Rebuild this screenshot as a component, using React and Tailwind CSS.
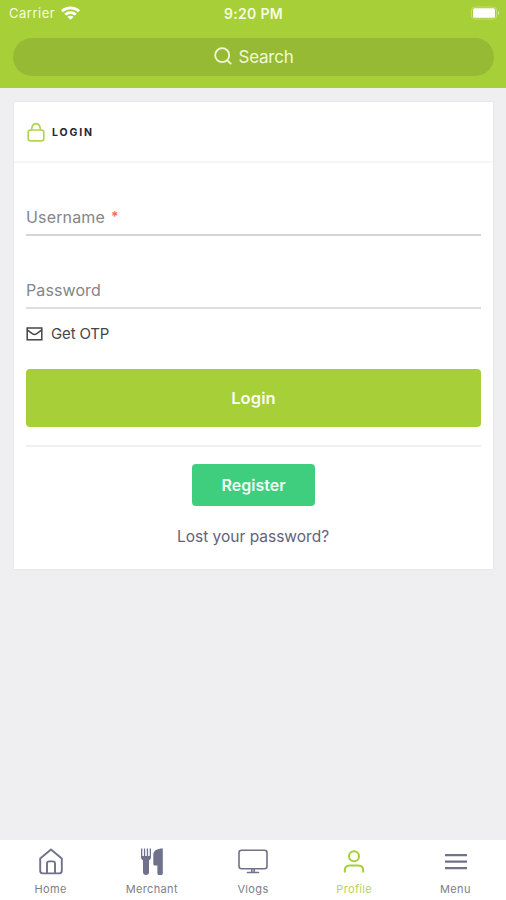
import React from "react";

const stroke = { fill: "none", stroke: "currentColor", strokeLinecap: "round", strokeLinejoin: "round" };

function StatusBar() {
  return (
    <div className="grid h-[26px] grid-cols-3 items-center pt-px pl-[9px] pr-[6px] text-[13px] text-[#f6fce0]">
      <div className="flex items-center gap-[6px]">
        <span className="tracking-[0.5px]">Carrier</span>
        <svg className="-mt-px" width="19" height="14" viewBox="0 0 18 14" fill="none" stroke="#fff" strokeWidth="2.7" preserveAspectRatio="none">
          <path d="M.9 5.2a11.5 11.5 0 0 1 16.2 0" />
          <path d="M4 8.6a7.1 7.1 0 0 1 10 0" />
          <path d="M9 13.7 6.2 10.9a3.9 3.9 0 0 1 5.6 0Z" fill="#fff" stroke="none" />
        </svg>
      </div>
      <span className="-ml-[2px] text-center text-[14px] font-semibold tracking-[0.3px] whitespace-nowrap">9:20 PM</span>
      <svg className="-mt-px justify-self-end" width="30" height="14" viewBox="0 0 30 14">
        <rect x="1.5" y="1" width="25" height="12" rx="3" fill="none" stroke="#c1dd75" />
        <rect x="3" y="2.3" width="22" height="9.4" rx="1.5" fill="#fff" />
        <path d="M28 4.8c1.6.6 1.6 3.8 0 4.4Z" fill="#d3e89a" />
      </svg>
    </div>
  );
}

function Header() {
  return (
    <header className="h-[88px] shrink-0 bg-[#a6cf38]">
      <StatusBar />
      <div className="mr-3 ml-[13px] mt-3 flex h-[38px] items-center justify-center gap-[7px] rounded-full bg-[#96ba34] text-[#f1f9d6]">
        <svg className="-mt-[2px]" width="18" height="18" viewBox="0 0 18 18" {...stroke} strokeWidth="1.8">
          <circle cx="8.2" cy="8.2" r="7" />
          <path d="m13.3 13.3 3.4 3.4" />
        </svg>
        <span className="pt-[2px] text-[17px] tracking-[-0.25px]">Search</span>
      </div>
    </header>
  );
}

function LoginCard() {
  return (
    <main className="mx-[14px] mt-[14px] h-[467px] w-[479px] bg-white px-3 shadow-[0_0_2px_rgba(0,0,0,0.1)]">
      <div className="-mx-3 flex h-[61px] items-center gap-2 border-b-2 border-[#f6f6f9] px-[13px]">
        <svg className="text-[#b2d44f]" width="18" height="20" viewBox="0 0 18 20" {...stroke} strokeWidth="1.7">
          <rect x="1.2" y="8" width="15.6" height="10.8" rx="2.4" />
          <path d="M4.4 7.8 5.2 4.6a3.9 3.9 0 0 1 7.6 0l.8 3.2" />
        </svg>
        <h1 className="-ml-px mt-[2px] text-[10.5px] font-bold tracking-[1.85px] text-[#25253a]">LOGIN</h1>
      </div>
      <div className="flex h-[73px] items-end border-b-2 border-[#d5d5d7] pb-[5px] text-[16px] leading-6 text-[#85858a]">
        <span className="tracking-[0.15px]">Username</span>
        <span className="ml-[6px] text-[14px] font-semibold text-[#f26666]">*</span>
      </div>
      <div className="flex h-[73px] items-end border-b-2 border-[#dddde0] pb-[5px] text-[16px] leading-6 tracking-[0.1px] text-[#85858a]">
        Password
      </div>
      <div className="mt-[14px] flex h-[22px] items-center gap-2 text-[15px] tracking-[-0.15px] text-[#46464a]">
        <svg width="17" height="14" viewBox="0 0 17 14" fill="none" stroke="currentColor" strokeWidth="1.5">
          <rect x="1.2" y="1" width="14.6" height="11.8" />
          <path d="M1.5 3.2 6.6 6.8q1.9 1.2 3.8 0l5.1-3.6" strokeLinecap="round" />
        </svg>
        <span>Get OTP</span>
      </div>
      <button className="mt-[24px] h-[58px] w-full rounded-[4px] bg-[#a6cf38] text-[16.5px] font-semibold tracking-[0.1px] text-[#fbfef0]">Login</button>
      <div className="mt-[18px] h-0.5 bg-[#f0f0f2]" />
      <div className="mt-[17px] flex flex-col items-center">
        <button className="h-[42px] w-[123px] rounded-[4px] bg-[#3fce7e] text-[16px] font-semibold text-[#f0fdf5]">Register</button>
        <a className="mt-[19px] mr-px text-[15.5px] leading-6 whitespace-nowrap text-[#62627a]">Lost your password?</a>
      </div>
    </main>
  );
}

const tabs = [
  {
    label: "Home",
    icon: (
      <svg width="26" height="28" viewBox="0 0 26 28" {...stroke} strokeWidth="1.9">
        <path d="M2.2 10.4 13 1.6l10.8 8.8v12.4a2.6 2.6 0 0 1-2.6 2.6H4.8a2.6 2.6 0 0 1-2.6-2.6Z" />
        <path d="M9 25v-9.4c0-1.4.8-2.2 2.2-2.2h3.6c1.4 0 2.2.8 2.2 2.2V25" />
      </svg>
    ),
  },
  {
    label: "Merchant",
    icon: (
      <svg width="24" height="28" viewBox="0 0 24 28" fill="currentColor">
        <path d="M1 .5h1.3V8h1.6V.5h1.3V8h1.6V.5h1.3V8h1.6V.5H11V9c0 1.8-.8 2.8-2 3.3V24a3 3 0 0 1-6 0V12.3C1.8 11.8 1 10.8 1 9Z" />
        <path d="M22.8.4v25.2c0 .9-.6 1.5-1.5 1.5h-2.4c-.9 0-1.5-.6-1.5-1.5V17.5h-2.6c-.9 0-1.5-.6-1.5-1.5V6.5C13.3 2.5 17 .4 22.8.4Z" />
      </svg>
    ),
  },
  {
    label: "Vlogs",
    icon: (
      <svg width="30" height="28" viewBox="0 0 30 28" {...stroke} strokeWidth="1.6">
        <rect x="1" y="2.2" width="28" height="18.5" rx="2.5" />
        <path d="M13.8 21v3M16.2 21v3M9.5 24.5h11" />
      </svg>
    ),
  },
  {
    label: "Profile",
    icon: (
      <svg width="24" height="28" viewBox="0 0 24 28" {...stroke} strokeLinecap="butt" strokeWidth="2">
        <circle cx="12" cy="8.2" r="5" />
        <path d="M2.8 24.5v-2c0-3.4 2-5 5-5h8.4c3 0 5 1.6 5 5v2" />
      </svg>
    ),
  },
  {
    label: "Menu",
    icon: (
      <svg className="ml-[2px]" width="24" height="28" viewBox="0 0 24 28" {...stroke} strokeLinecap="butt" strokeWidth="2.3">
        <path d="M1 7.2h22M1 13.7h22M1 20.2h22" />
      </svg>
    ),
  },
];

function TabBar() {
  return (
    <nav className="mt-auto grid h-[60px] grid-cols-5 bg-white">
      {tabs.map((tab) => {
        const active = tab.label === "Profile";
        return (
          <div key={tab.label} className={`flex flex-col items-center pt-2 ${active ? "text-[#a6cf38]" : "text-[#70718a]"}`}>
            {tab.icon}
            <span className={`mt-[5px] text-[11px] leading-4 tracking-[0.35px] ${active ? "text-[#b3d65c]" : "text-[#7e7e88]"}`}>{tab.label}</span>
          </div>
        );
      })}
    </nav>
  );
}

export default function App() {
  return (
    <div className="flex h-screen w-full flex-col overflow-hidden bg-[#efeff1] font-['Inter','Liberation_Sans',sans-serif]">
      <Header />
      <LoginCard />
      <TabBar />
    </div>
  );
}
